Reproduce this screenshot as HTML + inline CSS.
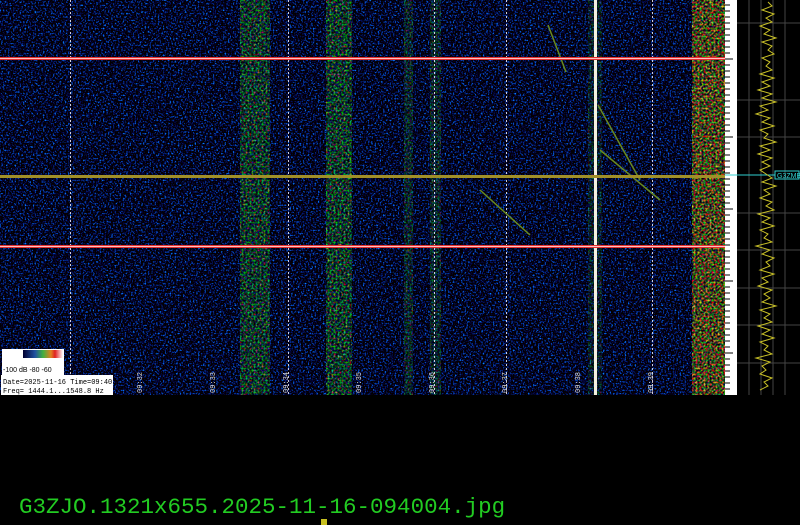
<!DOCTYPE html>
<html><head><style>
html,body{margin:0;padding:0;background:#000;width:800px;height:525px;overflow:hidden;position:relative}
.a{position:absolute}
.t{font-family:"Liberation Mono",monospace}
</style></head><body>
<svg class="a" style="left:0;top:0" width="800" height="396">
<defs>
<filter id="n" x="0" y="0" width="100%" height="100%" color-interpolation-filters="sRGB">
<feTurbulence type="fractalNoise" baseFrequency="0.6" numOctaves="2" seed="3"/>
<feColorMatrix type="matrix" values="0 0 0 0 0.01  2 0 0 0 -1.12  3 0 0 0 -1.4  0 0 0 0 1"/>
</filter>
<filter id="g" x="0" y="0" width="100%" height="100%" color-interpolation-filters="sRGB">
<feTurbulence type="fractalNoise" baseFrequency="0.5" numOctaves="2" seed="7"/>
<feColorMatrix type="matrix" values="3.5 0 0 0 -1.9  0 2.5 0 0 -1.0  0 0 1.5 0 -0.6  0 0 0 0 1"/>
</filter>
<filter id="r" x="0" y="0" width="100%" height="100%" color-interpolation-filters="sRGB">
<feTurbulence type="fractalNoise" baseFrequency="0.5" numOctaves="2" seed="11"/>
<feColorMatrix type="matrix" values="3.5 0 0 0 -1.45  0 2.5 0 0 -0.95  0 0 1 0 -0.4  0 0 0 0 1"/>
</filter>
<pattern id="dv" width="2" height="4" patternUnits="userSpaceOnUse"><rect width="1" height="2" fill="#ccd"/></pattern>
<linearGradient id="lg"><stop offset="0" stop-color="#000030"/><stop offset="0.3" stop-color="#2050a0"/><stop offset="0.5" stop-color="#40b040"/><stop offset="0.7" stop-color="#e08020"/><stop offset="0.8" stop-color="#e02020"/><stop offset="1" stop-color="#fff"/></linearGradient>
</defs>
<rect x="0" y="0" width="725" height="395" filter="url(#n)"/>
<rect x="240" y="0" width="30" height="395" filter="url(#g)" opacity="0.75"/>
<rect x="326" y="0" width="26" height="395" filter="url(#g)" opacity="0.8"/>
<rect x="404" y="0" width="9" height="395" filter="url(#g)" opacity="0.45"/>
<rect x="430" y="0" width="11" height="395" filter="url(#g)" opacity="0.45"/>
<rect x="588" y="0" width="14" height="395" filter="url(#g)" opacity="0.35"/>
<rect x="692" y="0" width="33" height="395" filter="url(#r)" opacity="0.85"/>
<g fill="url(#dv)">
<rect x="70" y="0" width="1" height="395"/><rect x="143" y="0" width="1" height="395"/>
<rect x="215" y="0" width="1" height="395"/><rect x="288" y="0" width="1" height="395"/>
<rect x="361" y="0" width="1" height="395"/><rect x="434" y="0" width="1" height="395"/>
<rect x="506" y="0" width="1" height="395"/><rect x="579" y="0" width="1" height="395"/>
<rect x="652" y="0" width="1" height="395"/>
</g>
<rect x="594" y="0" width="3" height="395" fill="#f4f0e0"/>
<g stroke="#6a8a20" stroke-width="1.5" fill="none">
<line x1="548" y1="25" x2="566" y2="72"/>
<line x1="598" y1="105" x2="640" y2="180"/>
<line x1="600" y1="150" x2="660" y2="200"/>
<line x1="480" y1="190" x2="530" y2="235"/>
</g>
<rect x="0" y="57" width="725" height="3" fill="#e03030"/><rect x="0" y="58" width="725" height="1" fill="#ffc0c0"/>
<rect x="0" y="175" width="725" height="3" fill="#a09028"/>
<rect x="0" y="245" width="725" height="3" fill="#e03030"/><rect x="0" y="246" width="725" height="1" fill="#ffc0c0"/>
<rect x="725" y="0" width="12" height="395" fill="#fff"/>
<g stroke="#000" stroke-width="1">
<path d="M725 5h5M725 11h5M725 17h5M725 23h5M725 29h5M725 35h5M725 41h5M725 47h5M725 53h5M725 59h8M725 65h5M725 71h5M725 77h5M725 83h5M725 89h5M725 95h5M725 101h5M725 107h5M725 113h5M725 119h5M725 125h5M725 131h5M725 137h8M725 143h5M725 149h5M725 155h5M725 161h5M725 167h5M725 173h5M725 179h5M725 185h5M725 191h5M725 197h5M725 203h5M725 209h8M725 215h5M725 221h5M725 227h5M725 233h5M725 239h5M725 245h5M725 251h5M725 257h5M725 263h5M725 269h5M725 275h5M725 281h8M725 287h5M725 293h5M725 299h5M725 305h5M725 311h5M725 317h5M725 323h5M725 329h5M725 335h5M725 341h5M725 347h5M725 353h8M725 359h5M725 365h5M725 371h5M725 377h5M725 383h5M725 389h5"/>
</g>
<rect x="737" y="0" width="63" height="395" fill="#000"/>
<g stroke="#444" stroke-width="1">
<path d="M737 23h63M737 100h63M737 137h63M737 213h63M737 250h63M737 288h63M737 325h63M737 363h63M749 0v395M761 0v395M773 0v395M785 0v395"/>
</g>
<line x1="725" y1="175" x2="775" y2="175" stroke="#30d0d0"/>
<rect x="775" y="171" width="24" height="8" fill="none" stroke="#30d0d0"/>
<text x="777" y="178" font-size="7" fill="#30d0d0" font-family="Liberation Sans">G3ZMBA</text>
<polyline fill="none" stroke="#c8c028" stroke-width="1" points="768,2 772,6 762,10 774,14 766,18 772,22 760,26 770,30 764,34 776,38 762,42 772,46 768,50 774,54 762,58 770,62 766,66 772,70 760,74 774,78 762,82 770,86 758,90 772,94 762,98 776,102 760,106 768,110 756,114 770,118 762,122 774,126 760,130 768,134 764,138 776,142 760,146 770,150 758,154 772,158 762,162 770,166 760,170 766,174 772,178 762,182 776,186 764,190 770,194 760,198 772,202 766,206 774,210 758,214 770,218 762,222 774,226 760,230 768,234 764,238 772,242 756,246 770,250 762,254 774,258 766,262 770,266 760,270 774,274 762,278 768,282 758,286 772,290 764,294 770,298 762,302 776,306 760,310 770,314 764,318 772,322 758,326 770,330 762,334 774,338 760,342 768,346 764,350 772,354 756,358 770,362 762,366 766,370 760,374 772,378 764,382 768,386 760,390"/>
<rect x="2" y="349" width="62" height="26" fill="#fff"/>
<rect x="23" y="350" width="40" height="8" fill="url(#lg)"/>
<text x="3" y="372" font-size="7" font-family="Liberation Sans" fill="#000">-100 dB   -80   -60</text>
<rect x="1" y="375" width="112" height="20" fill="#fff"/>
<text x="3" y="384" font-size="7" font-family="Liberation Mono" fill="#000">Date=2025-11-16 Time=09:40</text>
<text x="3" y="393" font-size="7" font-family="Liberation Mono" fill="#000">Freq= 1444.1...1548.8 Hz</text>
<g font-size="7" font-family="Liberation Mono" fill="#ddd">
<text transform="translate(142,393) rotate(-90)">09:32</text>
<text transform="translate(215,393) rotate(-90)">09:33</text>
<text transform="translate(288,393) rotate(-90)">09:34</text>
<text transform="translate(361,393) rotate(-90)">09:35</text>
<text transform="translate(434,393) rotate(-90)">09:36</text>
<text transform="translate(507,393) rotate(-90)">09:37</text>
<text transform="translate(580,393) rotate(-90)">09:38</text>
<text transform="translate(653,393) rotate(-90)">09:39</text>
</g>
</svg>
<div class="a t" style="left:19px;top:494px;font-size:22.5px;line-height:26px;color:#22cc22;white-space:pre">G3ZJO.1321x655.2025-11-16-094004.jpg</div>
<div class="a" style="left:321px;top:519px;width:6px;height:6px;background:#c8c020"></div>
</body></html>
